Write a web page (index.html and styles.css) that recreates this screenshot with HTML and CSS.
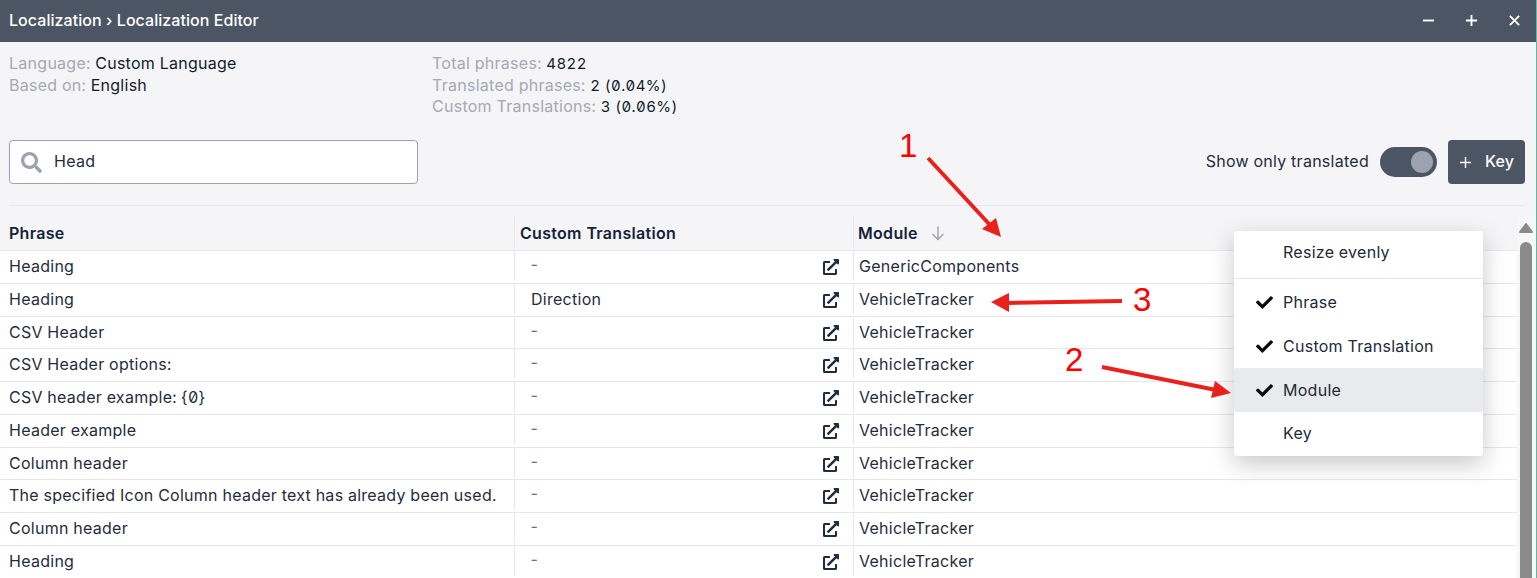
FILE: index.html
```html
<!DOCTYPE html>
<html lang="en">
<head>
    <meta charset="UTF-8">
    <meta name="viewport" content="width=device-width, initial-scale=1.0">
    <title>Localization Editor</title>
    <link rel="stylesheet" href="styles.css">
</head>
<body>
    <div class="window">
        <header class="titlebar">
            <span class="title">Localization › Localization Editor</span>
            <div class="window-buttons">
                <svg class="win-icon" viewBox="0 0 14 14"><path d="M1 7h12"/></svg>
                <svg class="win-icon" viewBox="0 0 14 14"><path d="M1 7h12M7 1v12"/></svg>
                <svg class="win-icon" viewBox="0 0 14 14"><path d="M2 2l10 10M12 2L2 12"/></svg>
            </div>
        </header>

        <section class="info">
            <div class="info-col info-col-left">
                <div><span class="muted">Language:</span> Custom Language</div>
                <div><span class="muted">Based on:</span> English</div>
            </div>
            <div class="info-col">
                <div><span class="muted">Total phrases:</span> <span class="num">4822</span></div>
                <div><span class="muted">Translated phrases:</span> <span class="num">2 (0.04%)</span></div>
                <div><span class="muted">Custom Translations:</span> <span class="num">3 (0.06%)</span></div>
            </div>
        </section>

        <section class="toolbar">
            <div class="search">
                <svg class="search-icon" viewBox="0 0 512 512"><path d="M505 442.700L405.300 343c-4.500-4.500-10.600-7-17-7H372c27.600-35.300 44-79.700 44-128C416 93.100 322.900 0 208 0S0 93.100 0 208s93.100 208 208 208c48.300 0 92.700-16.400 128-44v16.300c0 6.400 2.500 12.500 7 17l99.700 99.700c9.400 9.400 24.600 9.400 33.900 0l28.300-28.300c9.400-9.400 9.400-24.600.1-34zM208 336c-70.700 0-128-57.200-128-128 0-70.700 57.200-128 128-128 70.700 0 128 57.200 128 128 0 70.700-57.200 128-128 128z"/></svg>
                <span>Head</span>
            </div>
            <div class="toolbar-right">
                <span>Show only translated</span>
                <div class="toggle"><div class="knob"></div></div>
                <button class="add-btn">
                    <svg class="plus" viewBox="0 0 14 14"><path d="M1 7h12M7 1v12"/></svg>
                    Key
                </button>
            </div>
        </section>

        <div class="divider"></div>

        <div class="table-area">
            <div class="table">
                <div class="row head">
                    <div class="cell">Phrase</div>
                    <div class="cell">Custom Translation</div>
                    <div class="cell cell-module-head">Module
                        <svg class="sort" viewBox="0 0 16 16"><path d="M8 1.500v13M2.500 9L8 14.500 13.500 9"/></svg>
                    </div>
                </div>
                <div id="rows"></div>
            </div>
            <div class="scrollbar">
                <svg class="scroll-arrow" viewBox="0 0 14 10"><path d="M7 1L13 9H1Z"/></svg>
                <div class="scroll-thumb"></div>
            </div>
        </div>
    </div>

    <div class="menu">
        <div class="menu-item menu-item-first">Resize evenly</div>
        <div class="menu-sep"></div>
        <div class="menu-item"><svg class="check" viewBox="0 0 512 512"><path d="M173.898 439.404l-166.4-166.4c-9.997-9.997-9.997-26.206 0-36.204l36.203-36.204c9.997-9.998 26.207-9.998 36.204 0L192 312.69 432.095 72.596c9.997-9.997 26.207-9.997 36.204 0l36.203 36.204c9.997 9.997 9.997 26.206 0 36.204l-294.4 294.401c-9.998 9.997-26.207 9.997-36.204-.001z"/></svg>Phrase</div>
        <div class="menu-item"><svg class="check" viewBox="0 0 512 512"><path d="M173.898 439.404l-166.4-166.4c-9.997-9.997-9.997-26.206 0-36.204l36.203-36.204c9.997-9.998 26.207-9.998 36.204 0L192 312.69 432.095 72.596c9.997-9.997 26.207-9.997 36.204 0l36.203 36.204c9.997 9.997 9.997 26.206 0 36.204l-294.4 294.401c-9.998 9.997-26.207 9.997-36.204-.001z"/></svg>Custom Translation</div>
        <div class="menu-item active"><svg class="check" viewBox="0 0 512 512"><path d="M173.898 439.404l-166.4-166.4c-9.997-9.997-9.997-26.206 0-36.204l36.203-36.204c9.997-9.998 26.207-9.998 36.204 0L192 312.69 432.095 72.596c9.997-9.997 26.207-9.997 36.204 0l36.203 36.204c9.997 9.997 9.997 26.206 0 36.204l-294.4 294.401c-9.998 9.997-26.207 9.997-36.204-.001z"/></svg>Module</div>
        <div class="menu-item menu-item-last">Key</div>
    </div>

    <!-- red annotations drawn on top of the screenshot -->
    <svg class="notes" width="1537" height="578" viewBox="0 0 1537 578">
        <g class="note-line">
            <path d="M928 158L990 225"/>
            <path d="M1102 367L1216 390"/>
            <path d="M1122 301L1005 303"/>
        </g>
        <g class="note-head">
            <path d="M1001 237L982 229L996 218Z"/>
            <path d="M1231 393L1215 381L1211 398Z"/>
            <path d="M991 302L1009 293L1009 312Z"/>
        </g>
        <text class="note-num" x="899" y="157">1</text>
        <text class="note-num" x="1065" y="371">2</text>
        <text class="note-num" x="1133" y="311">3</text>
    </svg>

    <script>
        // Table data
        const phrases = [
            ["Heading", "-", "GenericComponents"],
            ["Heading", "Direction", "VehicleTracker"],
            ["CSV Header", "-", "VehicleTracker"],
            ["CSV Header options:", "-", "VehicleTracker"],
            ["CSV header example: {0}", "-", "VehicleTracker"],
            ["Header example", "-", "VehicleTracker"],
            ["Column header", "-", "VehicleTracker"],
            ["The specified Icon Column header text has already been used.", "-", "VehicleTracker"],
            ["Column header", "-", "VehicleTracker"],
            ["Heading", "-", "VehicleTracker"]
        ];

        const linkIcon = '<svg class="link-icon" viewBox="0 0 512 512"><path d="M432,320H400a16,16,0,0,0-16,16V448H64V128H208a16,16,0,0,0,16-16V80a16,16,0,0,0-16-16H48A48,48,0,0,0,0,112V464a48,48,0,0,0,48,48H400a48,48,0,0,0,48-48V336A16,16,0,0,0,432,320ZM488,0h-128c-21.37,0-32.05,25.91-17,41l35.73,35.73L135,320.37a24,24,0,0,0,0,34L157.67,377a24,24,0,0,0,34,0L435.28,133.32,471,169c15,15,41,4.5,41-17V24A24,24,0,0,0,488,0Z"/></svg>';

        let html = "";
        phrases.forEach(function(p) {
            html += '<div class="row">' +
                '<div class="cell">' + p[0] + '</div>' +
                '<div class="cell cell-custom"><span class="' + (p[1] === "-" ? "dash" : "") + '">' + p[1] + '</span>' + linkIcon + '</div>' +
                '<div class="cell">' + p[2] + '</div>' +
                '</div>';
        });
        document.getElementById("rows").innerHTML = html;
    </script>
</body>
</html>
```

FILE: styles.css
```css
html, body {
    margin: 0;
    height: 100%;
}

body {
    font-family: Inter, "Noto Sans", sans-serif;
    font-size: 16px;
    font-feature-settings: "zero", "tnum";
    letter-spacing: 0.27px;
    color: #1f2d3d;
    background-color: #5fb8a2;
    overflow: hidden;
}

.window {
    width: 1536px;
    height: 578px;
    background-color: #f5f5f8;
    overflow: hidden;
}

.titlebar {
    height: 42px;
    background-color: #4b5563;
    color: white;
    display: flex;
    justify-content: space-between;
    align-items: center;
    padding: 0 15px 0 9px;
}

.title {
    font-weight: 500;
    letter-spacing: 0.05px;
    margin-top: -2px;
}

.window-buttons {
    display: flex;
    gap: 30px;
    margin-top: -2px;
}

.win-icon {
    width: 13px;
    height: 13px;
    fill: none;
    stroke: white;
    stroke-width: 2;
    display: block;
}

.info {
    display: flex;
    padding: 11px 9px 0;
    height: 87px;
    line-height: 21.5px;
    color: #111c2b;
}

.info-col-left {
    width: 423px;
}

.muted {
    color: #a4a9b4;
}

.num {
    font-size: 15px;
    letter-spacing: 0.4px;
}

.toolbar {
    display: flex;
    justify-content: space-between;
    align-items: center;
    height: 44px;
    padding: 0 11px 0 9px;
}

.search {
    width: 409px;
    height: 44px;
    background: white;
    border: 1px solid #9ca3af;
    border-radius: 4px;
    display: flex;
    align-items: center;
    gap: 11px;
    padding: 0 0 2px 10px;
    box-sizing: border-box;
}

.search-icon {
    width: 23px;
    height: 21px;
    fill: #9ca3af;
    margin-top: 2px;
}

.toolbar-right {
    display: flex;
    align-items: center;
}

.toolbar-right > span {
    margin-top: -2px;
}

.toggle {
    width: 57px;
    height: 30px;
    border-radius: 15px;
    background-color: #4b5563;
    margin: 0 11px;
    display: flex;
    justify-content: flex-end;
    align-items: center;
    padding-right: 4px;
    box-sizing: border-box;
}

.knob {
    width: 22px;
    height: 22px;
    border-radius: 50%;
    background-color: #9ca3af;
}

.add-btn {
    width: 77px;
    height: 44px;
    background-color: #4b5563;
    color: white;
    border: none;
    border-radius: 4px;
    font-family: inherit;
    font-size: 16px;
    font-weight: 500;
    letter-spacing: 0.1px;
    display: flex;
    align-items: center;
    justify-content: center;
    gap: 13px;
    padding: 0 0 2px;
}

.plus {
    width: 13px;
    height: 13px;
    fill: none;
    stroke: white;
    stroke-width: 1.5;
    margin-top: 3px;
}

.divider {
    height: 1px;
    margin: 21px 11px 0 9px;
    background-color: #e8e9ec;
}

.table-area {
    display: flex;
    margin-top: 11px;
    height: 361px;
}

.table {
    width: 1517px;
    flex: none;
}

.row {
    display: grid;
    grid-template-columns: 514px 339px 1fr;
    height: 32.75px;
    background: white;
    border-bottom: 1px solid #e5e7eb;
    box-sizing: border-box;
    padding-bottom: 1.6px;
}

.row.head {
    height: 34px;
    background: #f5f5f8;
    font-weight: 600;
    color: #14233a;
    letter-spacing: 0.3px;
}

.cell {
    display: flex;
    align-items: center;
    padding-left: 9px;
    white-space: nowrap;
}

.cell + .cell {
    border-left: 1px solid #e5e7eb;
    padding-left: 5px;
}

.cell-custom {
    justify-content: space-between;
    padding-left: 16px !important;
    padding-right: 14px;
}

.cell-module-head {
    padding-left: 4px !important;
}

.dash {
    color: #6b7280;
    margin: -4px 0 0 -2px;
}

.link-icon {
    width: 16px;
    height: 16px;
    fill: #1f2d3d;
    margin-top: 2px;
}

.sort {
    width: 16px;
    height: 16px;
    margin-left: 12px;
    fill: none;
    stroke: #9ca3af;
    stroke-width: 1.4;
}

.scrollbar {
    width: 19px;
    flex: none;
    background-color: #f7f7f7;
    display: flex;
    flex-direction: column;
    align-items: center;
    padding: 6px 1px 0 0;
    box-sizing: border-box;
}

.scroll-arrow {
    width: 14px;
    height: 10px;
    flex: none;
    fill: #8a8a8a;
    stroke: #8a8a8a;
    stroke-width: 2;
    stroke-linejoin: round;
}

.scroll-thumb {
    width: 12px;
    flex: 1;
    margin-top: 9px;
    background-color: #8a8a8a;
    border-radius: 6px 6px 0 0;
}

/* column chooser popup */
.menu {
    position: absolute;
    left: 1234px;
    top: 231px;
    width: 249px;
    height: 225px;
    background: white;
    border-radius: 3px;
    box-shadow: 0 8px 24px rgba(0, 0, 0, 0.22);
    color: #222a35;
}

.menu-item {
    height: 44px;
    display: flex;
    align-items: center;
    padding-left: 49px;
    position: relative;
    box-sizing: border-box;
}

.menu-item-first {
    height: 47px;
    padding-bottom: 6px;
}

.menu-item-last {
    padding-bottom: 2px;
}

.menu-item.active {
    background-color: #e9eaed;
    border-radius: 2px;
}

.menu-sep {
    height: 1px;
    margin: 0 0 1px;
    background-color: #e5e7eb;
}

.check {
    position: absolute;
    left: 22px;
    width: 17px;
    height: 17px;
    fill: #0a0a0a;
}

.notes {
    position: absolute;
    left: 0;
    top: 0;
}

.note-line path {
    fill: none;
    stroke: #e8211d;
    stroke-width: 4;
}

.note-head path {
    fill: #e8211d;
}

.note-num {
    font-family: "Liberation Sans", sans-serif;
    font-size: 33px;
    letter-spacing: 0;
    fill: #f00;
}
```
